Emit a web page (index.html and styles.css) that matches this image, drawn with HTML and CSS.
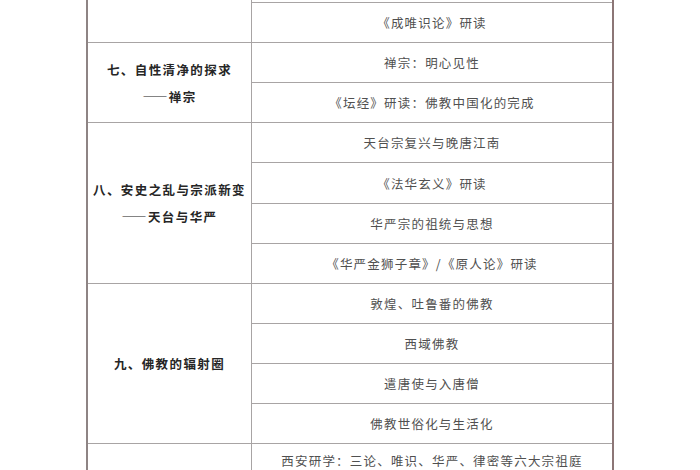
FILE: index.html
```html
<!DOCTYPE html>
<html lang="zh">
<head>
<meta charset="utf-8">
<link rel="stylesheet" href="styles.css">
</head>
<body>
<table class="course">
  <tr class="row"><td class="topic" rowspan="2"></td><td class="item"></td></tr>
  <tr class="row"><td class="item">《成唯识论》研读</td></tr>
  <tr class="row"><td class="topic" rowspan="2">七、自性清净的探求<br>——禅宗</td><td class="item">禅宗：明心见性</td></tr>
  <tr class="row"><td class="item">《坛经》研读：佛教中国化的完成</td></tr>
  <tr class="row"><td class="topic" rowspan="4">八、安史之乱与宗派新变<br>——天台与华严</td><td class="item">天台宗复兴与晚唐江南</td></tr>
  <tr class="row"><td class="item">《法华玄义》研读</td></tr>
  <tr class="row"><td class="item">华严宗的祖统与思想</td></tr>
  <tr class="row"><td class="item">《华严金狮子章》/《原人论》研读</td></tr>
  <tr class="row"><td class="topic" rowspan="4">九、佛教的辐射圈</td><td class="item">敦煌、吐鲁番的佛教</td></tr>
  <tr class="row"><td class="item">西域佛教</td></tr>
  <tr class="row"><td class="item">遣唐使与入唐僧</td></tr>
  <tr class="row"><td class="item">佛教世俗化与生活化</td></tr>
  <tr class="last"><td class="topic"></td><td class="item top">西安研学：三论、唯识、华严、律密等六大宗祖庭</td></tr>
</table>
</body>
</html>
```
FILE: styles.css
```css
html, body {
  margin: 0;
  padding: 0;
  background: #ffffff;
  overflow: hidden;
}
body {
  width: 700px;
  height: 470px;
  font-family: "Noto Sans CJK SC", "Noto Sans", sans-serif;
}
.course {
  border-collapse: collapse;
  margin-top: -38px;
  margin-left: 86px;
  width: 528px;
  table-layout: fixed;
}
.course td {
  border: 1.5px solid #a8a4a4;
  text-align: center;
  vertical-align: middle;
  padding: 0;
}
.course tr.row td {
  height: 39.1px;
}
.course td.topic {
  width: 163px;
  border-left: 2px solid #8e8484;
  font-size: 12.5px;
  font-weight: 700;
  letter-spacing: 1.4px;
  line-height: 27px;
  color: #262626;
}
.course td.item {
  border-right: 2px solid #8c7676;
  font-size: 12.5px;
  font-weight: 400;
  letter-spacing: 1.2px;
  color: #505050;
}
.course tr.last td {
  height: 60px;
}
.course td.top {
  vertical-align: top;
  padding-top: 7px;
  line-height: 20px;
}
```
